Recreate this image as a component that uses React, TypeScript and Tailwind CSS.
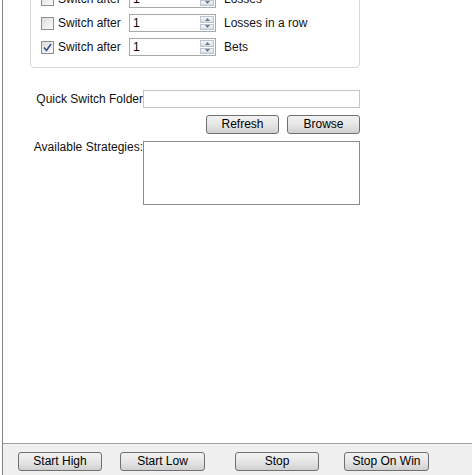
import React from "react";

const font = { fontFamily: '"Liberation Sans", Arial, sans-serif' };

function CheckBox({ checked }: { checked?: boolean }) {
  return (
    <span className="relative flex h-[13px] w-[13px] items-center justify-center border border-[#8f8f8f] bg-gradient-to-br from-[#dcdcdc] to-[#fbfbfb]">
      {checked && (
        <svg width="9" height="9" viewBox="0 0 9 9" className="absolute">
          <path d="M1 4.5 L3.5 7.5 L8 1" fill="none" stroke="#3a4f8a" strokeWidth="1.6" />
        </svg>
      )}
    </span>
  );
}

function Spinner() {
  return (
    <div className="flex h-[18px] w-[87px] items-stretch border border-[#a9a9a9] bg-white">
      <span className="flex-1 pl-[3px] text-[12px] leading-[16px] text-black">1</span>
      <div className="my-[1px] mr-[1px] flex w-[14px] flex-col gap-[1px]">
        <div className="flex flex-1 items-center justify-center border border-[#b8c4d0] bg-gradient-to-b from-[#f4f6f8] to-[#d8dfe6]">
          <svg width="5" height="3" viewBox="0 0 5 3">
            <path d="M0 3 L2.5 0 L5 3 Z" fill="#6a7a8a" />
          </svg>
        </div>
        <div className="flex flex-1 items-center justify-center border border-[#b8c4d0] bg-gradient-to-b from-[#f4f6f8] to-[#d8dfe6]">
          <svg width="5" height="3" viewBox="0 0 5 3">
            <path d="M0 0 L2.5 3 L5 0 Z" fill="#6a7a8a" />
          </svg>
        </div>
      </div>
    </div>
  );
}

function Row({ checked, label }: { checked?: boolean; label: string }) {
  return (
    <div className="flex h-[24px] items-center">
      <div className="ml-[10px] w-[88px] flex items-center gap-[4px]">
        <CheckBox checked={checked} />
        <span>Switch after</span>
      </div>
      <Spinner />
      <span className="ml-[8px]">{label}</span>
    </div>
  );
}

function Btn({ children, w }: { children: React.ReactNode; w: string }) {
  return (
    <button
      className={`${w} h-[19px] rounded-[3px] border border-[#707070] bg-gradient-to-b from-[#f2f2f2] via-[#e6e6e6] to-[#d0d0d0] text-[12px] leading-[17px] text-black`}
    >
      {children}
    </button>
  );
}

export default function App() {
  return (
    <div style={font} className="flex h-[475px] w-[472px] flex-col overflow-hidden bg-white text-[12px] text-[#111]">
      <div className="ml-[2px] flex flex-1 flex-col border-l border-[#808080]">
        <div className="ml-[27px] mt-[-23px] h-[91px] w-[330px] rounded-[4px] border border-[#d5d9dc] pt-[9px]">
          <Row label="Losses" />
          <Row label="Losses in a row" />
          <Row checked label="Bets" />
        </div>

        <div className="mt-[22px] flex h-[18px] items-center">
          <span className="w-[140px] text-right">Quick Switch Folder</span>
          <div className="h-[18px] w-[217px] border border-[#c5c5c5] bg-white" />
        </div>
        <div className="mt-[7px] flex gap-[8px] pl-[203px]">
          <Btn w="w-[73px]">Refresh</Btn>
          <Btn w="w-[73px]">Browse</Btn>
        </div>
        <div className="mt-[7px] flex">
          <span className="w-[140px] text-right leading-[12px]">Available Strategies:</span>
          <div className="h-[64px] w-[217px] border border-[#8a8a8a] bg-white" />
        </div>
        <div className="flex-1" />
        <div className="h-[32px] border-t border-[#a0a0a0] bg-[#f0f0f0]">
          <div className="mt-[8px] flex">
            <div className="ml-[15px]"><Btn w="w-[84px]">Start High</Btn></div>
            <div className="ml-[18px]"><Btn w="w-[85px]">Start Low</Btn></div>
            <div className="ml-[30px]"><Btn w="w-[84px]">Stop</Btn></div>
            <div className="ml-[25px]"><Btn w="w-[85px]">Stop On Win</Btn></div>
          </div>
        </div>
      </div>
    </div>
  );
}
